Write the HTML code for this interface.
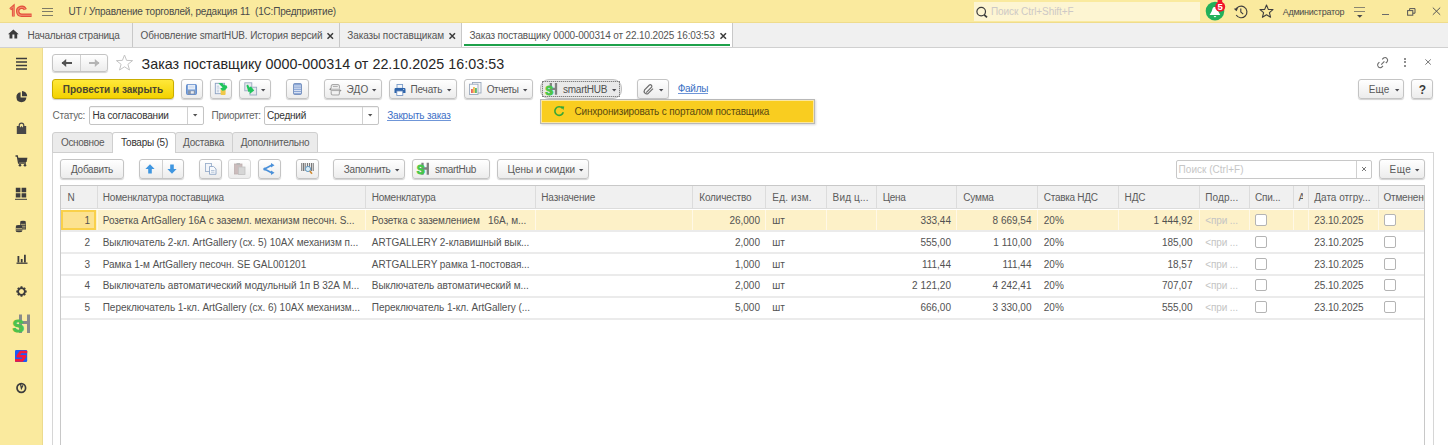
<!DOCTYPE html><html><head><meta charset="utf-8"><style>
*{box-sizing:border-box}
html,body{margin:0;padding:0;width:1448px;height:445px;overflow:hidden;background:#fff;font-family:"Liberation Sans",sans-serif}
.t{position:absolute;white-space:nowrap;line-height:1}
.r{position:absolute}
.btn{position:absolute;border:1px solid #c4c4c4;border-radius:3px;background:linear-gradient(#ffffff,#ececec);box-shadow:0 1px 1px rgba(0,0,0,.18)}
svg{position:absolute;overflow:visible}
</style></head><body>
<div class="r" style="left:0px;top:0px;width:1448px;height:23px;background:#faea9e"></div>
<div class="r" style="left:0px;top:22px;width:1448px;height:1px;background:#efdc8c"></div>
<svg style="left:0px;top:0px" width="40" height="23" viewBox="0 0 40 23">
<path d="M10.2 9.2 L13.3 6.6 L13.3 16.6" fill="none" stroke="#e4503c" stroke-width="2.8" stroke-linejoin="miter"/>
<path d="M10.2 9.2 L13.3 6.6 L13.3 16.6" fill="none" stroke="#f09070" stroke-width="0.9"/>
<path d="M25.3 9.6 A4 4 0 1 0 21.6 15.3 L31.6 15.3" fill="none" stroke="#e4503c" stroke-width="3.4"/>
<path d="M25.3 9.6 A4 4 0 1 0 21.6 15.3 L31.6 15.3" fill="none" stroke="#f09070" stroke-width="1.1"/>
</svg>
<div class="r" style="left:42px;top:7.5px;width:11px;height:1.3000000000000007px;background:#7d7a66"></div>
<div class="r" style="left:42px;top:11.2px;width:11px;height:1.3000000000000007px;background:#7d7a66"></div>
<div class="r" style="left:42px;top:14.8px;width:11px;height:1.3000000000000007px;background:#7d7a66"></div>
<div class="t" style="left:68.5px;top:7px;font-size:10px;color:#4a4a4a;letter-spacing:-0.19px;">UT / Управление торговлей, редакция 11&nbsp; (1С:Предприятие)</div>
<div class="r" style="left:974px;top:2px;width:226px;height:19px;background:#fdf5d2"></div>
<svg style="left:975px;top:6px" width="14" height="13" viewBox="0 0 14 13"><circle cx="6.2" cy="5.6" r="4.3" fill="none" stroke="#3c3c3c" stroke-width="1.2"/><path d="M9.3 8.8 L12 11.4" stroke="#3c3c3c" stroke-width="1.8"/></svg>
<div class="t" style="left:991px;top:7px;font-size:10px;color:#cdc9c6;letter-spacing:-0.07px;">Поиск Ctrl+Shift+F</div>
<svg style="left:1205px;top:0px" width="24" height="23" viewBox="0 0 24 23">
<circle cx="10" cy="11.1" r="9.3" fill="#22b05a"/>
<path d="M4.6 15 L6.6 11.6 L7.6 8.6 C8 7.4 8.8 7 10 7 C11.2 7 12 7.4 12.4 8.6 L13.4 11.6 L15.2 15 Z" fill="#fff"/>
<path d="M8.6 16 L11.4 16 L10 17.6Z" fill="#fff"/>
<rect x="12.6" y="0" width="4.6" height="4" fill="#f0142a"/>
<circle cx="15.2" cy="6.7" r="5" fill="#f0142a"/>
<text x="15.2" y="10.2" font-family="Liberation Sans" font-weight="bold" font-size="9.5" fill="#fff" text-anchor="middle">5</text>
</svg>
<svg style="left:1233px;top:4px" width="16" height="16" viewBox="0 0 16 16">
<path d="M2.6 6.2 A5.8 5.8 0 1 1 3.2 11" fill="none" stroke="#3e3e3e" stroke-width="1.15"/>
<path d="M0.8 4.8 L3.6 7.2 L5 4" fill="#3e3e3e"/>
<path d="M7.8 4.5 L7.8 8 L10.2 10.2" fill="none" stroke="#3e3e3e" stroke-width="1.1"/>
</svg>
<svg style="left:1259px;top:4px" width="15" height="15" viewBox="0 0 15 15"><path d="M7.5 1 L9.3 5.4 L14 5.6 L10.4 8.6 L11.6 13.3 L7.5 10.7 L3.4 13.3 L4.6 8.6 L1 5.6 L5.7 5.4 Z" fill="none" stroke="#3e3e3e" stroke-width="1.1" stroke-linejoin="round"/></svg>
<div class="t" style="left:1282.7px;top:8px;font-size:9px;color:#4a4a4a;letter-spacing:-0.26px;">Администратор</div>
<div class="r" style="left:1354px;top:7.2px;width:11px;height:1.1000000000000005px;background:#8a8670"></div>
<div class="r" style="left:1354px;top:10.6px;width:11px;height:1.0999999999999996px;background:#8a8670"></div>
<svg style="left:1357px;top:14.5px" width="6" height="3" viewBox="0 0 6 3"><path d="M0 0 L5.5 0 L2.75 2.8Z" fill="#4a4a4a"/></svg>
<div class="r" style="left:1382px;top:14px;width:7px;height:1.0999999999999996px;background:#6a6a6a"></div>
<svg style="left:1407px;top:8px" width="9" height="8" viewBox="0 0 9 8"><rect x="0.6" y="2.6" width="5.2" height="4.6" fill="none" stroke="#555" stroke-width="1"/><path d="M2.6 2.6 V0.6 H8 V5.2 H5.8" fill="none" stroke="#555" stroke-width="1"/></svg>
<svg style="left:1432px;top:7px" width="10" height="9" viewBox="0 0 10 9"><path d="M0.8 0.6 L8.2 7.8 M8.2 0.6 L0.8 7.8" stroke="#555" stroke-width="1"/></svg>
<div class="r" style="left:0px;top:23px;width:1448px;height:24px;background:#f0f0f0"></div>
<div class="r" style="left:0px;top:47px;width:1448px;height:1px;background:#d0d0d0"></div>
<svg style="left:8px;top:29px" width="11" height="10" viewBox="0 0 11 10"><path d="M0 5.2 L5.35 0.4 L10.7 5.2 L9.2 5.2 L9.2 9.6 L6.4 9.6 L6.4 5.6 L4.4 5.6 L4.4 9.6 L1.5 9.6 L1.5 5.2Z" fill="#3c3c3c"/></svg>
<div class="t" style="left:27.6px;top:30.5px;font-size:10px;color:#555555;letter-spacing:-0.27px;">Начальная страница</div>
<div class="r" style="left:132px;top:23px;width:1px;height:24px;background:#c8c8c8"></div>
<div class="t" style="left:140.5px;top:30.5px;font-size:10px;color:#555555;letter-spacing:-0.12px;">Обновление smartHUB. История версий</div>
<svg style="left:327px;top:33px" width="7" height="6" viewBox="0 0 7 6"><path d="M0.5 0.3 L6 5.7 M6 0.3 L0.5 5.7" stroke="#3a3a3a" stroke-width="1.5"/></svg>
<div class="r" style="left:339px;top:23px;width:1px;height:24px;background:#c8c8c8"></div>
<div class="t" style="left:347.2px;top:30.5px;font-size:10px;color:#555555;letter-spacing:-0.08px;">Заказы поставщикам</div>
<svg style="left:449px;top:33px" width="7" height="6" viewBox="0 0 7 6"><path d="M0.5 0.3 L6 5.7 M6 0.3 L0.5 5.7" stroke="#3a3a3a" stroke-width="1.5"/></svg>
<div class="r" style="left:461px;top:23px;width:1px;height:24px;background:#c8c8c8"></div>
<div class="r" style="left:462px;top:23px;width:270px;height:24px;background:#fff"></div>
<div class="r" style="left:464px;top:44px;width:266px;height:1.5px;background:#1ea14a"></div>
<div class="t" style="left:469.4px;top:30.5px;font-size:10px;color:#555555;letter-spacing:-0.145px;">Заказ поставщику 0000-000314 от 22.10.2025 16:03:53</div>
<svg style="left:720px;top:33px" width="7" height="6" viewBox="0 0 7 6"><path d="M0.5 0.3 L6 5.7 M6 0.3 L0.5 5.7" stroke="#3a3a3a" stroke-width="1.5"/></svg>
<div class="r" style="left:732px;top:23px;width:1px;height:24px;background:#c8c8c8"></div>
<div class="r" style="left:0px;top:48px;width:43px;height:397px;background:#faea9e"></div>
<div class="r" style="left:42px;top:48px;width:1px;height:397px;background:#ecdb8e"></div>

<svg style="left:15px;top:57px" width="13" height="13" viewBox="0 0 13 13"><path d="M1 1.5H12M1 5H12M1 8.5H12M1 12H12" stroke="#3d3d3d" stroke-width="1.5"/></svg>
<svg style="left:15px;top:90px" width="13" height="13" viewBox="0 0 13 13"><path d="M5.6 2.2 A5 5 0 1 0 11.4 7.6 L5.6 7.6Z" fill="#3d3d3d"/><path d="M7 1 A5.2 5.2 0 0 1 12.2 6.2 L7 6.2Z" fill="#3d3d3d"/></svg>
<svg style="left:16px;top:122px" width="11" height="13" viewBox="0 0 11 13"><path d="M3.2 5.2 V3.4 A2.3 2.3 0 0 1 7.8 3.4 V5.2" fill="none" stroke="#4a4a4a" stroke-width="1.2"/><path d="M0.8 4 L3.4 4 L4.2 5.4 L5.5 4 L6.8 5.4 L7.6 4 L10.2 4 V12 H0.8Z" fill="#484848"/></svg>
<svg style="left:15px;top:155px" width="13" height="12" viewBox="0 0 13 12"><path d="M0.5 1 H2.3 L3.6 8 H11" fill="none" stroke="#3d3d3d" stroke-width="1.3"/><path d="M2.8 2.8 H12.4 L11.6 7 H3.6Z" fill="#3d3d3d"/><circle cx="5" cy="10.2" r="1.3" fill="#3d3d3d"/><circle cx="10" cy="10.2" r="1.3" fill="#3d3d3d"/></svg>
<svg style="left:15px;top:187px" width="12" height="13" viewBox="0 0 12 13"><path d="M0.8 0.8H5.4V5.2H0.8ZM6.6 0.8H11.2V5.2H6.6ZM0.8 6.2H5.4V10.6H0.8ZM6.6 6.2H11.2V10.6H6.6Z" fill="#3d3d3d"/><path d="M0 12.3H12" stroke="#3d3d3d" stroke-width="1"/></svg>
<svg style="left:15px;top:220px" width="12" height="13" viewBox="0 0 12 13"><ellipse cx="8" cy="2.2" rx="3" ry="1.4" fill="#3d3d3d"/><path d="M5 3.2H11V9.5H5Z" fill="#3d3d3d"/><path d="M5.5 4.6H10.5M5.5 6.3H10.5M5.5 8H10.5" stroke="#faea9e" stroke-width="0.6"/><ellipse cx="4" cy="6.4" rx="3.2" ry="1.4" fill="#3d3d3d"/><path d="M0.8 7H7.2V11H0.8Z" fill="#3d3d3d"/><ellipse cx="4" cy="11" rx="3.2" ry="1.2" fill="#3d3d3d"/><path d="M1 8.5H7M1 10H7" stroke="#faea9e" stroke-width="0.6"/></svg>
<svg style="left:16px;top:254px" width="12" height="10" viewBox="0 0 12 10"><path d="M0.5 9.2H11.5" stroke="#3d3d3d" stroke-width="1.3"/><path d="M1.5 2H3.3V8.6H1.5ZM4.8 5H6.6V8.6H4.8ZM8 0.8H9.8V8.6H8Z" fill="#3d3d3d"/></svg>
<svg style="left:15px;top:284.5px" width="13" height="13" viewBox="0 0 13 13"><circle cx="6.5" cy="6.5" r="3.3" fill="none" stroke="#3d3d3d" stroke-width="2"/><path d="M9.00 6.50L11.70 6.50M8.27 8.27L10.18 10.18M6.50 9.00L6.50 11.70M4.73 8.27L2.82 10.18M4.00 6.50L1.30 6.50M4.73 4.73L2.82 2.82M6.50 4.00L6.50 1.30M8.27 4.73L10.18 2.82" stroke="#3d3d3d" stroke-width="1.9"/><circle cx="6.5" cy="6.5" r="2.2" fill="#faea9e"/></svg>
<svg style="left:11px;top:313px" width="21" height="21" viewBox="0 0 21 21"><path d="M9.5 1.4V20M17.5 1.4V20M9.5 9.4H17.5" stroke="#8a8a8a" stroke-width="3"/><text x="1.6" y="18.6" font-family="Liberation Sans" font-weight="bold" font-size="17" fill="#4cc24c" stroke="#4cc24c" stroke-width="1">S</text></svg>
<svg style="left:15px;top:349.5px" width="12.5" height="12.5" viewBox="0 0 12.5 12.5"><rect x="0" y="0" width="12.2" height="12" rx="1.2" fill="#1b5cf5"/><path d="M12.2 2 H5.6 L2.6 6.3 H10.2 L7.2 10.4 H0" fill="none" stroke="#f5173c" stroke-width="2.6" stroke-linejoin="round"/></svg>
<svg style="left:15px;top:382px" width="13" height="12" viewBox="0 0 13 12"><circle cx="6.3" cy="6" r="4.3" fill="none" stroke="#3d3d3d" stroke-width="1.7"/><path d="M5.4 1.6 L6.4 6.4 L8 3.2" fill="none" stroke="#3d3d3d" stroke-width="1.3"/></svg>

<div class="btn" style="left:52px;top:54px;width:56px;height:18px;"></div>
<div class="r" style="left:80px;top:55px;width:1px;height:16px;background:#d0d0d0"></div>
<svg style="left:60.6px;top:58px" width="12" height="10" viewBox="0 0 12 10"><path d="M1 5H11" stroke="#525252" stroke-width="2"/><path d="M0.5 5L5.2 1V9Z" fill="#525252"/></svg>
<svg style="left:88px;top:58px" width="12" height="10" viewBox="0 0 12 10"><path d="M1 5H11" stroke="#b4b4b4" stroke-width="2"/><path d="M11.5 5L6.8 1V9Z" fill="#b4b4b4"/></svg>
<svg style="left:115px;top:54px" width="19" height="17" viewBox="0 0 19 17"><path d="M9.5 1 L11.6 6.4 L17.6 6.6 L12.9 10.3 L14.5 16 L9.5 12.8 L4.5 16 L6.1 10.3 L1.4 6.6 L7.4 6.4 Z" fill="none" stroke="#c4c4c4" stroke-width="1"/></svg>
<div class="t" style="left:141.5px;top:56.8px;font-size:14.3px;color:#262626;letter-spacing:0.03px;">Заказ поставщику 0000-000314 от 22.10.2025 16:03:53</div>
<svg style="left:1376px;top:56px" width="13" height="13" viewBox="0 0 13 13"><path d="M5.2 8.6 L8.4 5.4" stroke="#6a6a6a" stroke-width="1.1"/><path d="M6.2 3.4 L7.6 2 A2.6 2.6 0 0 1 11.2 5.6 L9.8 7" fill="none" stroke="#6a6a6a" stroke-width="1.1"/><path d="M3.4 6.2 L2 7.6 A2.6 2.6 0 0 0 5.6 11.2 L7 9.8" fill="none" stroke="#6a6a6a" stroke-width="1.1"/></svg>
<div class="r" style="left:1404.2px;top:58.1px;width:2.0px;height:2.0px;background:#6a6a6a;border-radius:1px"></div>
<div class="r" style="left:1404.2px;top:61.3px;width:2.0px;height:2.0px;background:#6a6a6a;border-radius:1px"></div>
<div class="r" style="left:1404.2px;top:64.5px;width:2.0px;height:2.0px;background:#6a6a6a;border-radius:1px"></div>
<svg style="left:1424.6px;top:59.2px" width="7" height="6" viewBox="0 0 7 6"><path d="M0.4 0.4 L5.8 5.6 M5.8 0.4 L0.4 5.6" stroke="#787878" stroke-width="1"/></svg>
<div class="r" style="left:52px;top:79px;width:122px;height:20px;border:1px solid #c9ad00;border-radius:3px;background:linear-gradient(#ffe83a,#f3d200);box-shadow:0 1px 1px rgba(0,0,0,.2)"></div>
<div class="t" style="left:62.8px;top:84.8px;font-size:10px;color:#4a4630;font-weight:bold;letter-spacing:0.0px;">Провести и закрыть</div>
<div class="btn" style="left:181px;top:79px;width:22px;height:20px;"></div>
<svg style="left:186px;top:83.5px" width="11" height="11" viewBox="0 0 11 11"><rect x="0.5" y="0.5" width="10" height="10" rx="1" fill="#7ca3da" stroke="#5a86c8" stroke-width="0.9"/><rect x="2" y="0.8" width="7" height="4.6" fill="#eef3fa"/><path d="M2.6 2.2H8.4M2.6 3.8H8.4" stroke="#b8cbe6" stroke-width="0.6"/><rect x="2" y="6.6" width="7" height="3.6" fill="#8895aa"/><rect x="4.8" y="7.2" width="3" height="2.4" fill="#e8ecf2"/></svg>
<div class="btn" style="left:210px;top:79px;width:22px;height:20px;"></div>
<svg style="left:214px;top:82px" width="14" height="14" viewBox="0 0 14 14"><rect x="1.3" y="1.3" width="9.2" height="10.4" fill="#f2f5fa" stroke="#8aa0c2" stroke-width="0.9"/><path d="M2.8 4.2H5M2.8 6H5.5M2.8 8.2H5.2M2.8 9.8H5" stroke="#a8b8d0" stroke-width="0.7"/><path d="M6.6 7.4 V12.2 A2.5 0.9 0 0 0 11.6 12.2 V7.4Z" fill="#f0c84a"/><ellipse cx="9.1" cy="7.4" rx="2.5" ry="0.9" fill="#f8e08a"/><path d="M4.4 1.2 L8.2 0.9 L10 2.9 L12.6 3.6 L13.4 5.6 L11 8.2 L8.4 8.8 L6.2 6.6 L8.6 5.4 L6.6 3.6Z" fill="#1fc55c"/></svg>
<div class="btn" style="left:239px;top:79px;width:32px;height:20px;"></div>
<svg style="left:244px;top:82px" width="14" height="14" viewBox="0 0 14 14"><rect x="0.8" y="0.8" width="7" height="8" fill="#e6e8ec" stroke="#9aaac2" stroke-width="0.9"/><rect x="6" y="5.2" width="6.6" height="7.8" fill="#e6e8ec" stroke="#9aaac2" stroke-width="0.9"/><path d="M2.4 3.4 L4 2.6 L5.4 5.6 L7 4.6 L10.2 8.4 L5.6 12 L5.8 9.6 L4.4 10 Z" fill="#1fc55c"/></svg>
<svg style="left:260.8px;top:89.1px" width="5" height="3" viewBox="0 0 5 3"><path d="M0 0H4.4L2.2 2.4Z" fill="#4a4a50"/></svg>
<div class="btn" style="left:286px;top:79px;width:23px;height:20px;"></div>
<svg style="left:293px;top:83px" width="9" height="12" viewBox="0 0 9 12"><rect x="0.5" y="0.5" width="8" height="11" rx="1.2" fill="#8aa6d6" stroke="#6a86b8" stroke-width="0.8"/><path d="M1 3H8M1 5.2H8M1 7.4H8M1 9.6H8" stroke="#e8eef8" stroke-width="0.9"/></svg>
<div class="btn" style="left:324px;top:79px;width:58px;height:20px;"></div>
<svg style="left:328.5px;top:83.5px" width="13" height="12" viewBox="0 0 13 12"><path d="M2.2 4.4 V2.2 A1.6 1.6 0 0 1 3.8 0.6 H8.8 A1.6 1.6 0 0 1 10.4 2.2 V4.4" fill="none" stroke="#a8a8a8" stroke-width="1.1"/><path d="M2.2 7.2 V9.4 A1.6 1.6 0 0 0 3.8 11 H8.8 A1.6 1.6 0 0 0 10.4 9.4 V7.2" fill="none" stroke="#a8a8a8" stroke-width="1.1"/><path d="M1.5 5.2 H11 M1.8 6.6 H11.3 M3.8 2.6H8.8" stroke="#a0a0a0" stroke-width="0.9"/><path d="M0 5.2 L2 3.8 V6.6Z M12.6 6.6 L10.6 5.2 V8Z" fill="#909090"/></svg>
<div class="t" style="left:346.5px;top:84.8px;font-size:10px;color:#595959;letter-spacing:0.2px;">ЭДО</div>
<svg style="left:371.8px;top:89.1px" width="5" height="3" viewBox="0 0 5 3"><path d="M0 0H4.4L2.2 2.4Z" fill="#4a4a50"/></svg>
<div class="btn" style="left:389px;top:79px;width:68px;height:20px;"></div>
<svg style="left:394px;top:83.5px" width="12" height="12" viewBox="0 0 12 12"><rect x="3" y="0.5" width="5.6" height="3.8" fill="#f4f7fb" stroke="#7a9cc8" stroke-width="0.9"/><path d="M0.5 5.2 A1.2 1.2 0 0 1 1.7 4 H10.3 A1.2 1.2 0 0 1 11.5 5.2 V9 H0.5Z" fill="#2e64aa"/><rect x="2.8" y="7" width="6" height="4.4" fill="#fff" stroke="#6a8cc0" stroke-width="0.8"/><rect x="9" y="5" width="1.2" height="1" fill="#9fc0ea"/></svg>
<div class="t" style="left:410.5px;top:84.8px;font-size:10px;color:#595959;letter-spacing:-0.15px;">Печать</div>
<svg style="left:446.8px;top:89.1px" width="5" height="3" viewBox="0 0 5 3"><path d="M0 0H4.4L2.2 2.4Z" fill="#4a4a50"/></svg>
<div class="btn" style="left:464px;top:79px;width:69px;height:20px;"></div>
<svg style="left:469px;top:82px" width="13" height="13" viewBox="0 0 13 13"><rect x="3.5" y="0.5" width="8.5" height="10.5" fill="#f4f4f4" stroke="#9aa8bc" stroke-width="0.9"/><rect x="0.5" y="2.2" width="8.5" height="10.3" fill="#fafafa" stroke="#9aa8bc" stroke-width="0.9"/><rect x="2.2" y="7" width="1.5" height="4" fill="#e0443a"/><rect x="4.2" y="5" width="1.5" height="6" fill="#f0b030"/><rect x="6.2" y="6" width="1.5" height="5" fill="#3aa84a"/></svg>
<div class="t" style="left:486.7px;top:84.8px;font-size:10px;color:#595959;letter-spacing:-0.45px;">Отчеты</div>
<svg style="left:523.3px;top:89.1px" width="5" height="3" viewBox="0 0 5 3"><path d="M0 0H4.4L2.2 2.4Z" fill="#4a4a50"/></svg>
<div class="r" style="left:540px;top:79px;width:82px;height:20px;border:1px solid #c0c0c0;border-radius:9px;background:#e9e9e9"></div>
<div class="r" style="left:542px;top:81px;width:78px;height:16px;border:1px dotted #7a7a7a;border-radius:1px;outline:1px solid rgba(140,140,140,.35);outline-offset:-1px"></div>
<svg style="left:544px;top:82px" width="15" height="15" viewBox="0 0 15 15"><path d="M6.8 1V12.8M12 1V12.8M6.8 6.8H12" stroke="#808080" stroke-width="2.3"/><text x="1.3" y="12.6" font-family="Liberation Sans" font-weight="bold" font-size="12" fill="#48c848" stroke="#48c848" stroke-width="0.8">S</text></svg>
<div class="t" style="left:563px;top:84.8px;font-size:10px;color:#505050;letter-spacing:-0.25px;">smartHUB</div>
<svg style="left:612.3px;top:89.1px" width="5" height="3" viewBox="0 0 5 3"><path d="M0 0H4.4L2.2 2.4Z" fill="#4a4a50"/></svg>
<div class="btn" style="left:637px;top:79px;width:32px;height:20px;"></div>
<svg style="left:643px;top:83px" width="11" height="11" viewBox="0 0 11 11"><path d="M3.2 9.6 L8.6 4.2 A1.6 1.6 0 0 0 6.4 2 L1.6 6.8 A2.6 2.6 0 0 0 5.2 10.4 L10 5.6" fill="none" stroke="#6c6c6c" stroke-width="1.2" transform="rotate(0)"/></svg>
<svg style="left:658.8px;top:89.1px" width="5" height="3" viewBox="0 0 5 3"><path d="M0 0H4.4L2.2 2.4Z" fill="#4a4a50"/></svg>
<div class="t" style="left:677.7px;top:84px;font-size:10px;color:#3a6fc4;letter-spacing:-0.25px;">Файлы</div>
<div class="r" style="left:677.7px;top:93px;width:30.5px;height:1px;background:#6f96d8"></div>
<div class="btn" style="left:1358px;top:79px;width:46px;height:20px;"></div>
<div class="t" style="left:1368.8px;top:84.8px;font-size:10px;color:#595959;letter-spacing:0.1px;">Еще</div>
<svg style="left:1394.8px;top:89.1px" width="5" height="3" viewBox="0 0 5 3"><path d="M0 0H4.4L2.2 2.4Z" fill="#4a4a50"/></svg>
<div class="btn" style="left:1411px;top:79px;width:22px;height:20px;"></div>
<div class="t" style="left:1418.8px;top:83.8px;font-size:12px;color:#3a3a3a;font-weight:bold;">?</div>
<div class="t" style="left:52.5px;top:111.3px;font-size:10px;color:#666;letter-spacing:-0.25px;">Статус:</div>
<div class="r" style="left:89px;top:106px;width:115px;height:19px;border:1px solid #c4c4c4;border-radius:2px;background:#fff;box-shadow:inset 0 1px 1px rgba(0,0,0,.06)"></div>
<div class="r" style="left:187px;top:107px;width:1px;height:17px;background:#d0d0d0"></div>
<div class="t" style="left:92.5px;top:111.2px;font-size:10px;color:#333;letter-spacing:-0.2px;">На согласовании</div>
<svg style="left:193.4px;top:113.6px" width="5" height="3" viewBox="0 0 5 3"><path d="M0 0H4.4L2.2 2.4Z" fill="#525252"/></svg>
<div class="t" style="left:211.6px;top:111.3px;font-size:10px;color:#666;letter-spacing:-0.3px;">Приоритет:</div>
<div class="r" style="left:264px;top:106px;width:115px;height:19px;border:1px solid #c4c4c4;border-radius:2px;background:#fff;box-shadow:inset 0 1px 1px rgba(0,0,0,.06)"></div>
<div class="r" style="left:362px;top:107px;width:1px;height:17px;background:#d0d0d0"></div>
<div class="t" style="left:266.9px;top:111.2px;font-size:10px;color:#333;letter-spacing:-0.2px;">Средний</div>
<svg style="left:368.2px;top:113.6px" width="5" height="3" viewBox="0 0 5 3"><path d="M0 0H4.4L2.2 2.4Z" fill="#525252"/></svg>
<div class="t" style="left:387.2px;top:110.8px;font-size:10px;color:#3d6fc6;letter-spacing:-0.2px;">Закрыть заказ</div>
<div class="r" style="left:387.2px;top:119.8px;width:63.60000000000002px;height:1.0px;background:#6f96d8"></div>
<div class="r" style="left:52px;top:152px;width:1382px;height:1px;background:#d6d6d6"></div>
<div class="r" style="left:52px;top:152px;width:1px;height:293px;background:#d6d6d6"></div>
<div class="r" style="left:1433px;top:152px;width:1px;height:293px;background:#d6d6d6"></div>
<div class="r" style="left:52px;top:132px;width:61px;height:21px;border:1px solid #cfcfcf;border-radius:3px 3px 0 0;background:#ebebeb"></div>
<div class="r" style="left:175px;top:132px;width:58px;height:21px;border:1px solid #cfcfcf;border-radius:3px 3px 0 0;background:#ebebeb"></div>
<div class="r" style="left:232px;top:132px;width:86px;height:21px;border:1px solid #cfcfcf;border-radius:3px 3px 0 0;background:#ebebeb"></div>
<div class="r" style="left:112px;top:132px;width:64px;height:21px;border:1px solid #cfcfcf;border-bottom:none;border-radius:3px 3px 0 0;background:#fff"></div>
<div class="t" style="left:61px;top:137.5px;font-size:10px;color:#595959;letter-spacing:-0.33px;">Основное</div>
<div class="t" style="left:121px;top:137.5px;font-size:10px;color:#333;letter-spacing:-0.24px;">Товары (5)</div>
<div class="t" style="left:183px;top:137.5px;font-size:10px;color:#595959;letter-spacing:-0.23px;">Доставка</div>
<div class="t" style="left:240.7px;top:137.5px;font-size:10px;color:#595959;letter-spacing:-0.26px;">Дополнительно</div>
<div class="btn" style="left:60px;top:159px;width:64px;height:20px;"></div>
<div class="t" style="left:71px;top:165px;font-size:10px;color:#595959;letter-spacing:-0.28px;">Добавить</div>
<div class="btn" style="left:139px;top:159px;width:45px;height:20px;"></div>
<div class="r" style="left:162px;top:160px;width:1px;height:18px;background:#d0d0d0"></div>
<svg style="left:145px;top:164px" width="10" height="10" viewBox="0 0 10 10"><path d="M5 0.3 L9.6 5 L6.8 5 L6.8 9.6 L3.2 9.6 L3.2 5 L0.4 5Z" fill="#3f96e0"/></svg>
<svg style="left:167px;top:164px" width="10" height="10" viewBox="0 0 10 10"><path d="M5 9.7 L9.6 5 L6.8 5 L6.8 0.4 L3.2 0.4 L3.2 5 L0.4 5Z" fill="#3f96e0"/></svg>
<div class="btn" style="left:199px;top:159px;width:23px;height:20px;"></div>
<svg style="left:205px;top:163px" width="12" height="12" viewBox="0 0 12 12"><rect x="0.5" y="0.5" width="6" height="8" fill="#f2f5fa" stroke="#9bb0cc" stroke-width="0.9"/><path d="M4.5 3.5 H8.6 L11 5.9 V11.3 H4.5Z" fill="#f7f9fc" stroke="#8fa6c6" stroke-width="0.9"/><path d="M6 7.5H9.5M6 9.2H9.5" stroke="#9bb0cc" stroke-width="0.7"/></svg>
<div class="btn" style="left:228px;top:159px;width:23px;height:20px;border-color:#d8d8d8;box-shadow:none"></div>
<svg style="left:234px;top:163px" width="12" height="12" viewBox="0 0 12 12"><rect x="0.5" y="1" width="7.5" height="10" fill="#cbbcbc" stroke="#bdb0b0" stroke-width="0.8"/><rect x="4.5" y="4" width="6.5" height="7.5" fill="#d6d6d6" stroke="#c0c0c0" stroke-width="0.8"/><rect x="2.5" y="0" width="3.5" height="2" fill="#b8b8b8"/></svg>
<div class="btn" style="left:258px;top:159px;width:23px;height:20px;"></div>
<svg style="left:263px;top:163px" width="12" height="12" viewBox="0 0 12 12"><path d="M1.5 6 L9 2 M1.5 6 L9 10" stroke="#4a90d9" stroke-width="1.6" fill="none"/><path d="M8 0 L11.5 2.2 L8 4.4Z M8 7.6 L11.5 9.8 L8 12Z" fill="#4a90d9"/><circle cx="1.8" cy="6" r="1.6" fill="#4a90d9"/></svg>
<div class="btn" style="left:296px;top:159px;width:23px;height:20px;"></div>
<svg style="left:301px;top:163px" width="13" height="12" viewBox="0 0 13 12"><path d="M0.8 0V8M2.6 0V8M4.2 0V8M6.4 0V8M8.4 0V8M10.4 0V8M12.2 0V8" stroke="#6a6a6a" stroke-width="1"/><circle cx="7" cy="6" r="2.6" fill="#d6ecf8" stroke="#6a9cc4" stroke-width="1"/><path d="M8.8 8 L11 10.8" stroke="#d08a30" stroke-width="1.6"/></svg>
<div class="btn" style="left:333px;top:159px;width:72px;height:20px;"></div>
<div class="t" style="left:343.8px;top:165px;font-size:10px;color:#595959;letter-spacing:-0.26px;">Заполнить</div>
<svg style="left:395.3px;top:169.1px" width="5" height="3" viewBox="0 0 5 3"><path d="M0 0H4.4L2.2 2.4Z" fill="#4a4a50"/></svg>
<div class="btn" style="left:412px;top:159px;width:78px;height:20px;"></div>
<svg style="left:416px;top:162px" width="15" height="14" viewBox="0 0 15 14"><path d="M6.5 0.8V12.7M11.8 0.8V12.7M6.5 6.5H11.8" stroke="#808080" stroke-width="2.3"/><text x="0.8" y="12.4" font-family="Liberation Sans" font-weight="bold" font-size="12" fill="#48c848" stroke="#48c848" stroke-width="0.8">S</text></svg>
<div class="t" style="left:435px;top:165px;font-size:10px;color:#595959;letter-spacing:-0.3px;">smartHub</div>
<div class="btn" style="left:497px;top:159px;width:92px;height:20px;"></div>
<div class="t" style="left:507.6px;top:165px;font-size:10px;color:#595959;letter-spacing:0.0px;">Цены и скидки</div>
<svg style="left:578.8px;top:169.1px" width="5" height="3" viewBox="0 0 5 3"><path d="M0 0H4.4L2.2 2.4Z" fill="#4a4a50"/></svg>
<div class="r" style="left:1176px;top:160px;width:196px;height:19px;border:1px solid #c8c8c8;border-radius:2px;background:#fff"></div>
<div class="r" style="left:1356px;top:161px;width:1px;height:17px;background:#d0d0d0"></div>
<svg style="left:1361px;top:166px" width="6" height="6" viewBox="0 0 6 6"><path d="M1 1 L5 5 M5 1 L1 5" stroke="#777" stroke-width="1"/></svg>
<div class="t" style="left:1178.6px;top:165px;font-size:10px;color:#c6c6c6;letter-spacing:0.02px;">Поиск (Ctrl+F)</div>
<div class="btn" style="left:1379px;top:159px;width:46px;height:20px;"></div>
<div class="t" style="left:1389.6px;top:165px;font-size:10px;color:#595959;letter-spacing:0.4px;">Еще</div>
<svg style="left:1414.8px;top:169.1px" width="5" height="3" viewBox="0 0 5 3"><path d="M0 0H4.4L2.2 2.4Z" fill="#4a4a50"/></svg>
<div class="r" style="left:60px;top:185px;width:1365px;height:260px;background:#fff;border:1px solid #c8c8c8;border-bottom:none"></div>
<div class="r" style="left:61px;top:186px;width:1363px;height:23px;background:#f0f0f0"></div>
<div class="r" style="left:61px;top:208px;width:1363px;height:1px;background:#dcdcdc"></div>
<div class="r" style="left:96.5px;top:186px;width:1.0px;height:22px;background:#dcdcdc"></div>
<div class="r" style="left:365px;top:186px;width:1px;height:22px;background:#dcdcdc"></div>
<div class="r" style="left:535px;top:186px;width:1px;height:22px;background:#dcdcdc"></div>
<div class="r" style="left:692px;top:186px;width:1px;height:22px;background:#dcdcdc"></div>
<div class="r" style="left:765px;top:186px;width:1px;height:22px;background:#dcdcdc"></div>
<div class="r" style="left:826px;top:186px;width:1px;height:22px;background:#dcdcdc"></div>
<div class="r" style="left:876px;top:186px;width:1px;height:22px;background:#dcdcdc"></div>
<div class="r" style="left:956px;top:186px;width:1px;height:22px;background:#dcdcdc"></div>
<div class="r" style="left:1037px;top:186px;width:1px;height:22px;background:#dcdcdc"></div>
<div class="r" style="left:1117.5px;top:186px;width:1.0px;height:22px;background:#dcdcdc"></div>
<div class="r" style="left:1198.5px;top:186px;width:1.0px;height:22px;background:#dcdcdc"></div>
<div class="r" style="left:1248.5px;top:186px;width:1.0px;height:22px;background:#dcdcdc"></div>
<div class="r" style="left:1292.5px;top:186px;width:1.0px;height:22px;background:#dcdcdc"></div>
<div class="r" style="left:1307.5px;top:186px;width:1.0px;height:22px;background:#dcdcdc"></div>
<div class="r" style="left:1377.5px;top:186px;width:1.0px;height:22px;background:#dcdcdc"></div>
<div class="t" style="left:67.5px;top:192.6px;font-size:10px;color:#5c5c5c;">N</div>
<div class="t" style="left:102.7px;top:192.6px;font-size:10px;color:#5c5c5c;letter-spacing:-0.17px;">Номенклатура поставщика</div>
<div class="t" style="left:371.8px;top:192.6px;font-size:10px;color:#5c5c5c;letter-spacing:-0.28px;">Номенклатура</div>
<div class="t" style="left:541.3px;top:192.6px;font-size:10px;color:#5c5c5c;letter-spacing:-0.17px;">Назначение</div>
<div class="t" style="left:699.3px;top:192.6px;font-size:10px;color:#5c5c5c;letter-spacing:-0.17px;">Количество</div>
<div class="t" style="left:772.3px;top:192.6px;font-size:10px;color:#5c5c5c;letter-spacing:0.19px;">Ед. изм.</div>
<div class="t" style="left:832.6px;top:192.6px;font-size:10px;color:#5c5c5c;letter-spacing:0.14px;">Вид ц...</div>
<div class="t" style="left:882.7px;top:192.6px;font-size:10px;color:#5c5c5c;letter-spacing:-0.33px;">Цена</div>
<div class="t" style="left:963.2px;top:192.6px;font-size:10px;color:#5c5c5c;letter-spacing:-0.17px;">Сумма</div>
<div class="t" style="left:1043.8px;top:192.6px;font-size:10px;color:#5c5c5c;letter-spacing:-0.29px;">Ставка НДС</div>
<div class="t" style="left:1124.6px;top:192.6px;font-size:10px;color:#5c5c5c;letter-spacing:-0.17px;">НДС</div>
<div class="t" style="left:1205.2px;top:192.6px;font-size:10px;color:#5c5c5c;letter-spacing:0.13px;">Подр...</div>
<div class="t" style="left:1254.9px;top:192.6px;font-size:10px;color:#5c5c5c;letter-spacing:-0.17px;">Спи...</div>
<div class="r" style="left:1293px;top:186px;width:9.5px;height:22px;overflow:hidden"><div class="t" style="left:5.4px;top:6.6px;font-size:10px;color:#5f5f5f">А</div></div>
<div class="t" style="left:1314.3px;top:192.6px;font-size:10px;color:#5c5c5c;letter-spacing:-0.01px;">Дата отгру...</div>
<div class="r" style="left:1378px;top:186px;width:46px;height:22px;overflow:hidden"><div class="t" style="left:5.4px;top:6.6px;font-size:10px;color:#5c5c5c;letter-spacing:-0.17px">Отменено</div></div>
<div class="r" style="left:61px;top:210px;width:1363px;height:20px;background:#fdf1c8"></div>
<div class="r" style="left:96.5px;top:210px;width:1.0px;height:20px;background:#fff8e6"></div>
<div class="r" style="left:365px;top:210px;width:1px;height:20px;background:#fff8e6"></div>
<div class="r" style="left:535px;top:210px;width:1px;height:20px;background:#fff8e6"></div>
<div class="r" style="left:692px;top:210px;width:1px;height:20px;background:#fff8e6"></div>
<div class="r" style="left:765px;top:210px;width:1px;height:20px;background:#fff8e6"></div>
<div class="r" style="left:826px;top:210px;width:1px;height:20px;background:#fff8e6"></div>
<div class="r" style="left:876px;top:210px;width:1px;height:20px;background:#fff8e6"></div>
<div class="r" style="left:956px;top:210px;width:1px;height:20px;background:#fff8e6"></div>
<div class="r" style="left:1037px;top:210px;width:1px;height:20px;background:#fff8e6"></div>
<div class="r" style="left:1117.5px;top:210px;width:1.0px;height:20px;background:#fff8e6"></div>
<div class="r" style="left:1198.5px;top:210px;width:1.0px;height:20px;background:#fff8e6"></div>
<div class="r" style="left:1248.5px;top:210px;width:1.0px;height:20px;background:#fff8e6"></div>
<div class="r" style="left:1292.5px;top:210px;width:1.0px;height:20px;background:#fff8e6"></div>
<div class="r" style="left:1307.5px;top:210px;width:1.0px;height:20px;background:#fff8e6"></div>
<div class="r" style="left:1377.5px;top:210px;width:1.0px;height:20px;background:#fff8e6"></div>
<div class="r" style="left:61px;top:210px;width:35px;height:20px;background:#fce290;border:2px solid #f9d04a"></div>
<div class="r" style="left:61px;top:230px;width:1363px;height:2px;background:#ebebeb"></div>
<div class="r" style="left:61px;top:252px;width:1363px;height:2px;background:#ebebeb"></div>
<div class="r" style="left:61px;top:274px;width:1363px;height:2px;background:#ebebeb"></div>
<div class="r" style="left:61px;top:296px;width:1363px;height:2px;background:#ebebeb"></div>
<div class="r" style="left:61px;top:318px;width:1363px;height:2px;background:#ebebeb"></div>
<div class="t" style="left:61px;width:29px;text-align:right;top:215.9px;font-size:10px;color:#525252">1</div>
<div class="t" style="left:102.7px;top:215.9px;font-size:10px;color:#525252;letter-spacing:-0.03px;">Розетка ArtGallery 16А с заземл. механизм песочн. S...</div>
<div class="t" style="left:371.8px;top:215.9px;font-size:10px;color:#525252;letter-spacing:-0.03px;">Розетка с заземлением &nbsp; 16А, м...</div>
<div class="t" style="left:692px;width:68px;text-align:right;top:215.9px;font-size:10px;color:#525252">26,000</div>
<div class="t" style="left:772.3px;top:215.9px;font-size:10px;color:#525252;">шт</div>
<div class="t" style="left:876px;width:75px;text-align:right;top:215.9px;font-size:10px;color:#525252">333,44</div>
<div class="t" style="left:956px;width:75.5px;text-align:right;top:215.9px;font-size:10px;color:#525252">8 669,54</div>
<div class="t" style="left:1043.8px;top:215.9px;font-size:10px;color:#525252;">20%</div>
<div class="t" style="left:1117px;width:75.5px;text-align:right;top:215.9px;font-size:10px;color:#525252">1 444,92</div>
<div class="t" style="left:1205.2px;top:215.9px;font-size:10px;color:#c4c4c4;letter-spacing:-0.1px;">&lt;при ...</div>
<div class="r" style="left:1255px;top:213.9px;width:12px;height:12px;border:1px solid #b4b4b4;border-radius:2px;background:#fff"></div>
<div class="t" style="left:1314.3px;top:215.9px;font-size:10px;color:#525252;letter-spacing:-0.1px;">23.10.2025</div>
<div class="r" style="left:1384px;top:213.9px;width:12px;height:12px;border:1px solid #b4b4b4;border-radius:2px;background:#fff"></div>
<div class="t" style="left:61px;width:29px;text-align:right;top:237.70000000000002px;font-size:10px;color:#525252">2</div>
<div class="t" style="left:102.7px;top:237.70000000000002px;font-size:10px;color:#525252;letter-spacing:-0.03px;">Выключатель 2-кл. ArtGallery (сх. 5) 10АХ механизм п...</div>
<div class="t" style="left:371.8px;top:237.70000000000002px;font-size:10px;color:#525252;letter-spacing:-0.03px;">ARTGALLERY 2-клавишный вык...</div>
<div class="t" style="left:692px;width:68px;text-align:right;top:237.70000000000002px;font-size:10px;color:#525252">2,000</div>
<div class="t" style="left:772.3px;top:237.70000000000002px;font-size:10px;color:#525252;">шт</div>
<div class="t" style="left:876px;width:75px;text-align:right;top:237.70000000000002px;font-size:10px;color:#525252">555,00</div>
<div class="t" style="left:956px;width:75.5px;text-align:right;top:237.70000000000002px;font-size:10px;color:#525252">1 110,00</div>
<div class="t" style="left:1043.8px;top:237.70000000000002px;font-size:10px;color:#525252;">20%</div>
<div class="t" style="left:1117px;width:75.5px;text-align:right;top:237.70000000000002px;font-size:10px;color:#525252">185,00</div>
<div class="t" style="left:1205.2px;top:237.70000000000002px;font-size:10px;color:#c4c4c4;letter-spacing:-0.1px;">&lt;при ...</div>
<div class="r" style="left:1255px;top:235.70000000000002px;width:12px;height:12px;border:1px solid #b4b4b4;border-radius:2px;background:#fff"></div>
<div class="t" style="left:1314.3px;top:237.70000000000002px;font-size:10px;color:#525252;letter-spacing:-0.1px;">23.10.2025</div>
<div class="r" style="left:1384px;top:235.70000000000002px;width:12px;height:12px;border:1px solid #b4b4b4;border-radius:2px;background:#fff"></div>
<div class="t" style="left:61px;width:29px;text-align:right;top:259.5px;font-size:10px;color:#525252">3</div>
<div class="t" style="left:102.7px;top:259.5px;font-size:10px;color:#525252;letter-spacing:-0.03px;">Рамка 1-м ArtGallery песочн. SE GAL001201</div>
<div class="t" style="left:371.8px;top:259.5px;font-size:10px;color:#525252;letter-spacing:-0.03px;">ARTGALLERY рамка 1-постовая...</div>
<div class="t" style="left:692px;width:68px;text-align:right;top:259.5px;font-size:10px;color:#525252">1,000</div>
<div class="t" style="left:772.3px;top:259.5px;font-size:10px;color:#525252;">шт</div>
<div class="t" style="left:876px;width:75px;text-align:right;top:259.5px;font-size:10px;color:#525252">111,44</div>
<div class="t" style="left:956px;width:75.5px;text-align:right;top:259.5px;font-size:10px;color:#525252">111,44</div>
<div class="t" style="left:1043.8px;top:259.5px;font-size:10px;color:#525252;">20%</div>
<div class="t" style="left:1117px;width:75.5px;text-align:right;top:259.5px;font-size:10px;color:#525252">18,57</div>
<div class="t" style="left:1205.2px;top:259.5px;font-size:10px;color:#c4c4c4;letter-spacing:-0.1px;">&lt;при ...</div>
<div class="r" style="left:1255px;top:257.5px;width:12px;height:12px;border:1px solid #b4b4b4;border-radius:2px;background:#fff"></div>
<div class="t" style="left:1314.3px;top:259.5px;font-size:10px;color:#525252;letter-spacing:-0.1px;">23.10.2025</div>
<div class="r" style="left:1384px;top:257.5px;width:12px;height:12px;border:1px solid #b4b4b4;border-radius:2px;background:#fff"></div>
<div class="t" style="left:61px;width:29px;text-align:right;top:281.3px;font-size:10px;color:#525252">4</div>
<div class="t" style="left:102.7px;top:281.3px;font-size:10px;color:#525252;letter-spacing:-0.03px;">Выключатель автоматический модульный 1п B 32А М...</div>
<div class="t" style="left:371.8px;top:281.3px;font-size:10px;color:#525252;letter-spacing:-0.03px;">Выключатель автоматический м...</div>
<div class="t" style="left:692px;width:68px;text-align:right;top:281.3px;font-size:10px;color:#525252">2,000</div>
<div class="t" style="left:772.3px;top:281.3px;font-size:10px;color:#525252;">шт</div>
<div class="t" style="left:876px;width:75px;text-align:right;top:281.3px;font-size:10px;color:#525252">2 121,20</div>
<div class="t" style="left:956px;width:75.5px;text-align:right;top:281.3px;font-size:10px;color:#525252">4 242,41</div>
<div class="t" style="left:1043.8px;top:281.3px;font-size:10px;color:#525252;">20%</div>
<div class="t" style="left:1117px;width:75.5px;text-align:right;top:281.3px;font-size:10px;color:#525252">707,07</div>
<div class="t" style="left:1205.2px;top:281.3px;font-size:10px;color:#c4c4c4;letter-spacing:-0.1px;">&lt;при ...</div>
<div class="r" style="left:1255px;top:279.3px;width:12px;height:12px;border:1px solid #b4b4b4;border-radius:2px;background:#fff"></div>
<div class="t" style="left:1314.3px;top:281.3px;font-size:10px;color:#525252;letter-spacing:-0.1px;">25.10.2025</div>
<div class="r" style="left:1384px;top:279.3px;width:12px;height:12px;border:1px solid #b4b4b4;border-radius:2px;background:#fff"></div>
<div class="t" style="left:61px;width:29px;text-align:right;top:303.1px;font-size:10px;color:#525252">5</div>
<div class="t" style="left:102.7px;top:303.1px;font-size:10px;color:#525252;letter-spacing:-0.03px;">Переключатель 1-кл. ArtGallery (сх. 6) 10АХ механизм...</div>
<div class="t" style="left:371.8px;top:303.1px;font-size:10px;color:#525252;letter-spacing:-0.03px;">Переключатель 1-кл. ArtGallery (...</div>
<div class="t" style="left:692px;width:68px;text-align:right;top:303.1px;font-size:10px;color:#525252">5,000</div>
<div class="t" style="left:772.3px;top:303.1px;font-size:10px;color:#525252;">шт</div>
<div class="t" style="left:876px;width:75px;text-align:right;top:303.1px;font-size:10px;color:#525252">666,00</div>
<div class="t" style="left:956px;width:75.5px;text-align:right;top:303.1px;font-size:10px;color:#525252">3 330,00</div>
<div class="t" style="left:1043.8px;top:303.1px;font-size:10px;color:#525252;">20%</div>
<div class="t" style="left:1117px;width:75.5px;text-align:right;top:303.1px;font-size:10px;color:#525252">555,00</div>
<div class="t" style="left:1205.2px;top:303.1px;font-size:10px;color:#c4c4c4;letter-spacing:-0.1px;">&lt;при ...</div>
<div class="r" style="left:1255px;top:301.1px;width:12px;height:12px;border:1px solid #b4b4b4;border-radius:2px;background:#fff"></div>
<div class="t" style="left:1314.3px;top:303.1px;font-size:10px;color:#525252;letter-spacing:-0.1px;">23.10.2025</div>
<div class="r" style="left:1384px;top:301.1px;width:12px;height:12px;border:1px solid #b4b4b4;border-radius:2px;background:#fff"></div>
<div class="r" style="left:540px;top:99px;width:275px;height:25px;border:1px solid #b8b8b8;background:#f9cd20;box-shadow:inset 0 0 0 1px #fbe7a0, 1px 1px 2px rgba(0,0,0,.15)"></div>
<svg style="left:553px;top:105px" width="12" height="12" viewBox="0 0 12 12"><path d="M9.4 3.2 A4.3 4.3 0 1 0 10.3 7.2" fill="none" stroke="#37a637" stroke-width="1.6"/><path d="M7.6 1.2 L11.2 1.4 L10.5 4.9Z" fill="#37a637"/></svg>
<div class="t" style="left:574.4px;top:107px;font-size:10px;color:#5a4a10;letter-spacing:-0.15px;">Синхронизировать с порталом поставщика</div>
</body></html>
